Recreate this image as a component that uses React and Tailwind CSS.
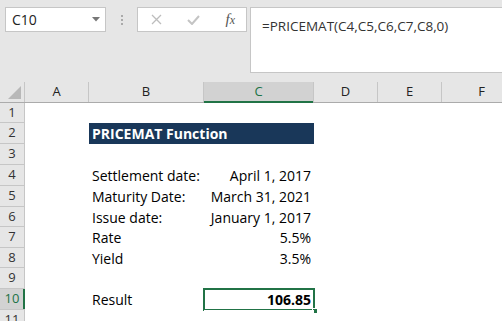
import React from "react";

const cols = [
  { w: 64, l: "A" },
  { w: 115, l: "B" },
  { w: 110, l: "C", sel: true },
  { w: 64, l: "D" },
  { w: 64, l: "E" },
  { w: 80, l: "F" },
];

const rows = [
  { n: 1, h: 20 },
  { n: 2, h: 21, title: true },
  { n: 3, h: 21 },
  { n: 4, h: 21, b: "Settlement date:", c: "April 1, 2017" },
  { n: 5, h: 21, b: "Maturity Date:", c: "March 31, 2021" },
  { n: 6, h: 20, b: "Issue date:", c: "January 1, 2017" },
  { n: 7, h: 21, b: "Rate", c: "5.5%" },
  { n: 8, h: 20, b: "Yield", c: "3.5%" },
  { n: 9, h: 21 },
  { n: 10, h: 21, b: "Result", c: "106.85", sel: true },
  { n: 11, h: 21 },
];

const font = { fontFamily: '"Open Sans", "Liberation Sans", sans-serif' };

export default function App() {
  return (
    <div className="w-[502px] h-[321px] overflow-hidden bg-[#e6e6e6] relative" style={font}>
      {/* top bar */}
      <div className="h-[82px] flex items-start pt-[7px] pl-[5px]">
        <div className="w-[101px] h-[25px] bg-white border border-[#c6c6c6] flex items-center justify-between pl-[6px] pr-[5px]">
          <span className="text-[14px] text-[#222] leading-none">C10</span>
          <svg width="8" height="5" viewBox="0 0 8 5"><path d="M0 0h8L4 4.5z" fill="#777" /></svg>
        </div>
        <div className="w-[31px] h-[25px] flex flex-col items-center justify-center gap-[2px]">
          <div className="w-[2px] h-[2px] bg-[#aaa]" />
          <div className="w-[2px] h-[2px] bg-[#aaa]" />
          <div className="w-[2px] h-[2px] bg-[#aaa]" />
        </div>
        <div className="w-[110px] h-[25px] bg-white border border-[#c6c6c6] flex items-center justify-between pl-[13px] pr-[11px]">
          <svg width="11" height="11" viewBox="0 0 11 11"><path d="M1 1l9 9M10 1l-9 9" stroke="#bdbdbd" strokeWidth="1.3" /></svg>
          <svg width="13" height="10" viewBox="0 0 13 10"><path d="M1 5l4 4 7-8" stroke="#c4c4c4" strokeWidth="2" fill="none" /></svg>
          <span className="text-[15px] italic text-[#555] leading-none" style={{ fontFamily: '"Liberation Serif", serif' }}>f<span className="text-[12px]">x</span></span>
        </div>
        <div className="ml-[3px] flex-1 h-[66px] bg-white border border-r-0 border-[#c6c6c6] pl-[11px] pt-[5px]">
          <span className="text-[13.5px] text-[#333] leading-none">=PRICEMAT(C4,C5,C6,C7,C8,0)</span>
        </div>
      </div>

      {/* column headers */}
      <div className="flex h-[21px] border-b border-[#ababab]">
        <div className="w-[25px] shrink-0 border-r border-[#c6c6c6] relative">
          <svg className="absolute right-[3px] bottom-[3px]" width="13" height="13" viewBox="0 0 13 13"><path d="M13 0v13H0z" fill="#b8b8b8" /></svg>
        </div>
        {cols.map((c) => (
          <div
            key={c.l}
            style={{ width: c.w }}
            className={`shrink-0 flex items-center justify-center text-[13px] border-r border-[#c6c6c6] relative ${c.sel ? "bg-[#d2d2d2] text-[#217346]" : "text-[#222]"}`}
          >
            {c.l}
            {c.sel && <div className="absolute left-0 right-0 bottom-[-1px] h-[2px] bg-[#217346]" />}
          </div>
        ))}
      </div>

      {/* rows */}
      {rows.map((r) => (
        <div key={r.n} className="flex" style={{ height: r.h }}>
          <div className={`w-[25px] shrink-0 flex items-center justify-center text-[13px] border-b border-r border-[#c6c6c6] relative ${r.sel ? "bg-[#d2d2d2] text-[#217346]" : "bg-[#e6e6e6] text-[#333]"}`}>
            {r.n}
            {r.sel && <div className="absolute top-0 bottom-0 right-[-1px] w-[2px] bg-[#217346]" />}
          </div>
          <div className="w-[64px] shrink-0 bg-white" />
          {r.title ? (
            <div className="w-[225px] shrink-0 bg-[#193759] text-white font-bold text-[14px] flex items-center pl-[3px]">PRICEMAT Function</div>
          ) : (
            <>
              <div className="w-[115px] shrink-0 bg-white flex items-center pl-[3px] text-[14px] text-black">{r.b}</div>
              <div className={`w-[110px] shrink-0 bg-white flex items-center justify-end pr-[3px] text-[14px] text-black relative ${r.sel ? "font-bold" : ""}`}>
                {r.c}
                {r.sel && (
                  <>
                    <div className="absolute inset-[-1px] border-2 border-[#217346]" />
                    <div className="absolute right-[-4px] bottom-[-4px] w-[6px] h-[6px] bg-[#217346] border border-white" />
                  </>
                )}
              </div>
            </>
          )}
          <div className="flex-1 bg-white" />
        </div>
      ))}
    </div>
  );
}
